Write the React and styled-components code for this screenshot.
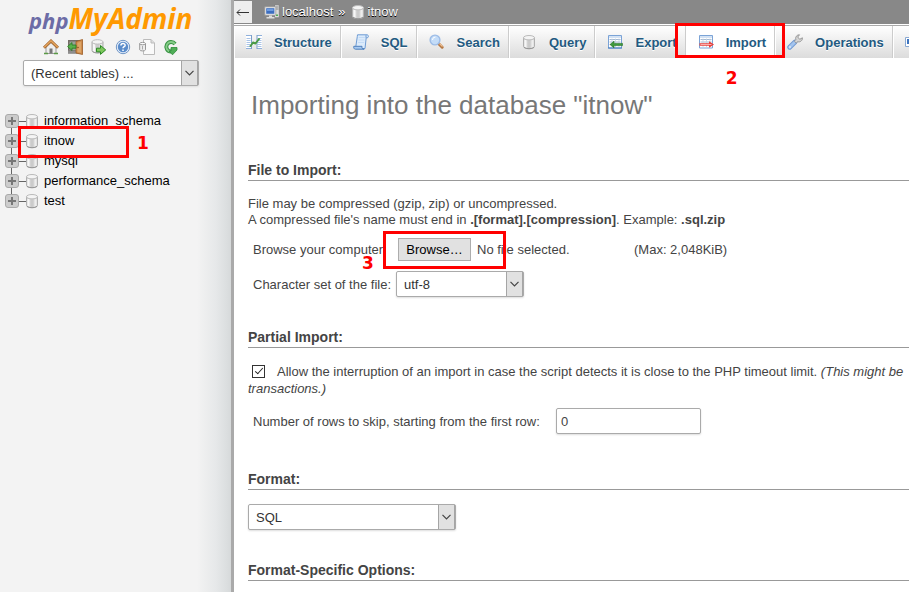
import React, { useRef } from "react";
import styled, { createGlobalStyle, css } from "styled-components";

const Global = createGlobalStyle`
  *, *::before, *::after { box-sizing: border-box; }
  html, body { margin: 0; height: 100%; overflow: hidden; }
  #root { height: 100%; }
  body, button, input, select {
    font-family: "Liberation Sans", Arial, sans-serif;
    font-size: 13px;
    color: #444;
  }
`;

const Page = styled.div`
  display: flex;
  height: 100vh;
  background: #fff;
`;

const Sidebar = styled.aside`
  flex: 0 0 234px;
  border-right: 3px solid #aaa;
  background: linear-gradient(to left, #d6d9da 0, #dcdfe0 5px, #e6e8e9 15px, #f3f3f3 34px);
`;

const Logo = styled.a`
  display: block;
  height: 38px;
  padding-left: 29px;
  font: italic bold 28px/36px "Open Sans", "Noto Sans", sans-serif;
  color: #f90;
  text-decoration: none;
  white-space: nowrap;
`;

const LogoPrefix = styled.span`
  font-size: 22px;
  color: #6c6ca6;
`;

const IconBar = styled.nav`
  display: flex;
  gap: 8px;
  padding: 1px 0 5px 43px;
`;

const IconLink = styled.a`
  display: block;
  width: 16px;
  height: 16px;
`;

const Svg = styled.svg`
  display: block;
  flex: none;
  width: 16px;
  height: 16px;
`;

const RecentTables = styled.div`
  padding: 0 32px 0 23px;
`;

const SelectWrap = styled.div`
  position: relative;
  width: ${(p) => p.$width || "100%"};
  height: 26px;
`;

const field = css`
  height: 26px;
  border: 1px solid #aaa;
  border-radius: 2px;
  background: #fff;
  box-shadow: 0 1px 2px #ddd;
`;

const SelectBox = styled.select`
  ${field}
  appearance: none;
  display: block;
  width: 100%;
  padding: 0 20px 0 7px;
  color: #333;
`;

const SelectArrow = styled.span`
  position: absolute;
  inset: 1px 1px 1px auto;
  width: 17px;
  display: grid;
  place-items: center;
  border: solid #a5a5a5;
  border-width: 0 1px 0 1px;
  background: #e1e1e1;
  pointer-events: none;
`;

const Chevron = styled.svg`
  display: block;
  width: 9px;
  height: 6px;
`;

const Plus = styled.svg`
  display: block;
  width: 8px;
  height: 8px;
`;

const Tree = styled.ul`
  list-style: none;
  margin: 25px 0 0;
  padding: 0 0 0 5px;
`;

const TreeRow = styled.li`
  position: relative;
  display: flex;
  align-items: center;
  height: 20px;
`;

const Expander = styled.button`
  flex: none;
  width: 14px;
  height: 14px;
  padding: 0;
  border: 1px solid #aaa;
  border-radius: 3px;
  background: #ccc;
  display: grid;
  place-items: center;
`;

const Branch = styled.span`
  width: 7px;
  height: 1px;
  background: #666;
`;

const Trunk = styled.span`
  position: absolute;
  left: 6px;
  top: 17px;
  width: 1px;
  height: 6px;
  background: #666;
`;

const TreeLink = styled.a`
  display: flex;
  align-items: center;
  gap: 4px;
  margin-left: -2px;
  color: #000;
  text-decoration: none;
`;

const TreeName = styled.span`
  line-height: 18px;
  padding-bottom: 1px;
`;

const Main = styled.main`
  flex: 1;
  min-width: 0;
  overflow: hidden;
`;

const Crumbs = styled.header`
  display: flex;
  align-items: center;
  height: 24px;
  background: #888;
`;

const BackButton = styled.button`
  width: 18px;
  height: 22px;
  padding: 0;
  border: 0;
  background: #eee;
  display: grid;
  place-items: center;
  margin-right: 12px;
`;

const Crumb = styled.a`
  display: flex;
  align-items: center;
  gap: 2px;
  padding-bottom: 1px;
  color: #fff;
  text-decoration: none;
  text-shadow: 0 1px 0 #000;
`;

const CrumbSep = styled.span`
  padding: 0 4px 1px 5px;
  color: #fff;
  text-shadow: 0 1px 0 #000;
`;

const Tabs = styled.nav`
  display: flex;
  height: 33px;
  margin-top: 1px;
  border-top: 1px solid #aaa;
  background: linear-gradient(#fff, #dcdcdc);
`;

const Tab = styled.a`
  position: relative;
  flex: none;
  display: flex;
  align-items: center;
  gap: 12px;
  padding: 0 8px 0 11px;
  border-left: 1px solid #fff;
  border-right: 1px solid #ccc;
  background: ${(p) => (p.$active ? "#fff" : "transparent")};
  color: #235a81;
  font-weight: bold;
  text-decoration: none;
  text-shadow: 0 1px 0 #fff;
`;

const Content = styled.div`
  padding: 32px 0 0 14px;
`;

const Title = styled.h2`
  margin: 0 0 41px 3px;
  font-size: 26px;
  line-height: 30px;
  font-weight: normal;
  color: #777;
`;

const Section = styled.section`
  margin-bottom: ${(p) => p.$gap}px;
`;

const Legend = styled.h3`
  margin: 0 0 14px;
  padding-bottom: 1px;
  border-bottom: 1px solid #999;
  font-size: 14px;
  line-height: 18px;
  color: #444;
`;

const Para = styled.p`
  margin: 0;
  padding-top: 1px;
  line-height: 16px;
  white-space: nowrap;
`;

const CheckPara = styled(Para)`
  line-height: 17px;
`;

const FormRow = styled.div`
  position: relative;
  display: flex;
  align-items: center;
  padding-left: 5px;
  margin-top: ${(p) => p.$top}px;
  white-space: nowrap;
`;

const FileLabel = styled.label`
  flex: 0 0 145px;
`;

const HiddenFile = styled.input`
  display: none;
`;

const BrowseButton = styled.button`
  width: 73px;
  height: 23px;
  padding: 0;
  border: 1px solid #adadad;
  background: #e1e1e1;
  color: #000;
`;

const FileState = styled.span`
  flex: 0 0 163px;
  padding-left: 6px;
`;

const CharsetLabel = styled.label`
  flex: 0 0 143px;
`;

const RowsLabel = styled.label`
  flex: 0 0 303px;
`;

const TextBox = styled.input`
  ${field}
  width: 145px;
  padding: 0 4px;
`;

const Check = styled.input`
  appearance: none;
  position: relative;
  width: 13px;
  height: 13px;
  margin: 0 12px 0 4px;
  vertical-align: -2px;
  border: 1px solid #333;
  background: #fff;
  &:checked::after {
    content: "";
    position: absolute;
    left: 4px;
    top: 0;
    width: 4px;
    height: 8px;
    border: solid #222;
    border-width: 0 1px 1px 0;
    transform: rotate(42deg);
  }
`;

const Marker = styled.span`
  position: absolute;
  z-index: 2;
  left: ${(p) => p.$x}px;
  top: ${(p) => p.$y}px;
  width: ${(p) => p.$w}px;
  height: ${(p) => p.$h}px;
  border: 3px solid #f00;
  pointer-events: none;
`;

const MarkerNumber = styled.span`
  position: absolute;
  z-index: 2;
  left: ${(p) => p.$x}px;
  top: ${(p) => p.$y}px;
  font: bold 17px/14px "DejaVu Sans", Verdana, sans-serif;
  color: #f00;
  text-shadow: none;
  pointer-events: none;
`;

const Icon = ({ children }) => (
  <Svg viewBox="0 0 16 16" aria-hidden="true">
    {children}
  </Svg>
);

const HomeIcon = () => (
  <Icon>
    <path d="M3 8v6.5h10V8L8 3.5z" fill="#eee" stroke="#999" />
    <path d="M6.5 14.5v-5h3v5z" fill="#777" />
    <path d="M1 8.8 8 2l7 6.8" fill="none" stroke="#9c5a22" strokeWidth="2.8" />
    <path d="M1.2 8.4 8 1.9l6.800 6.500" fill="none" stroke="#e0a25c" strokeWidth="1.5" />
    <path d="M1 14.5h4M11 14.5h4" stroke="#5a9a45" strokeWidth="1.6" />
  </Icon>
);
const ExitIcon = () => (
  <Icon>
    <path d="M1 1h14v13.500H1z" fill="#746d66" />
    <path d="M2.500 2.500H9V11H2.500z" fill="#9aa39a" />
    <path d="M1 11.500h9v3H1z" fill="#8d8d8d" />
    <path d="M9 2.500 15.500.5v15L9 14z" fill="#cf8d4d" stroke="#9a5a25" strokeWidth=".8" />
    <path d="M10.500 3.800 14 2.800v10.900l-3.500-.7z" fill="#dda567" />
    <circle cx="11" cy="8.500" r=".8" fill="#8a5020" />
    <path d="M.6 7.500 5 3.600V6h4v3.200H5v2.400z" fill="#59b14c" stroke="#23791e" strokeWidth=".8" />
  </Icon>
);
const Cylinder = () => (
  <>
    <path d="M2.500 3.800v8.600c0 1.400 2.400 2.300 5.500 2.300s5.500-.9 5.500-2.300V3.800z" fill="#d9d9d9" stroke="#b0b0b0" />
    <path d="M3.500 5.500v7.300l2 .9V6z" fill="#f7f7f7" />
    <path d="M6.500 6.200V14h3V6.200z" fill="#cbcbcb" />
    <path d="M10.500 6v7.700l2-.9V5.500z" fill="#eee" />
    <ellipse cx="8" cy="3.700" rx="5.500" ry="2.200" fill="#f4f4f4" stroke="#bbb" />
    <path d="M3 13.300c2 1.900 8 1.900 10 0" fill="none" stroke="#8f8f8f" strokeWidth=".8" />
  </>
);
const DbIcon = () => (
  <Icon>
    <Cylinder />
  </Icon>
);
const DbExportIcon = () => (
  <Icon>
    <g transform="translate(-1.5 -.8)">
      <Cylinder />
    </g>
    <path d="M5.5 9.2h4V6.5l5.2 4.4-5.2 4.5v-2.6h-4z" fill="#7cc75b" stroke="#2d8a26" />
  </Icon>
);
const HelpIcon = () => (
  <Icon>
    <circle cx="8" cy="8" r="6.700" fill="#e6eefa" stroke="#7096c6" />
    <circle cx="8" cy="8" r="5.200" fill="#5a8ccb" />
    <path d="M5.9 6.5C6 3.9 10.2 4 10.1 6.4 10 7.8 8 7.7 8 9.3M8 10.4V12" fill="none" stroke="#fff" strokeWidth="1.5" />
  </Icon>
);
const DocIcon = () => (
  <Icon>
    <path d="M4.500.500h7.500l3.500 3.500v11.500h-11z" fill="#fafafa" stroke="#bbb" />
    <path d="M12 .500v3.500h3.500" fill="#ddd" stroke="#bbb" />
    <path d="M.7 4.800v6c0 1.500 5.800 1.500 5.800 0v-6z" fill="#eee" stroke="#999" />
    <ellipse cx="3.600" cy="4.600" rx="2.900" ry="1.200" fill="#fff" stroke="#999" />
    <path d="M3.500 7v3.500" stroke="#aaa" />
  </Icon>
);
const ReloadIcon = () => (
  <Icon>
    <path d="M12 5A4.800 4.800 0 1 0 8 12.600" fill="none" stroke="#3b9546" strokeWidth="4" />
    <path d="M12 5A4.800 4.800 0 1 0 8 12.600" fill="none" stroke="#86cc88" strokeWidth="1.800" />
    <path d="M8 8.500h6v2.500l-4.500 4.800L6 12h2z" fill="#4fae57" stroke="#2f8a3a" strokeWidth=".8" />
  </Icon>
);
const ServerIcon = () => (
  <Icon>
    <path d="M10.500.8h4.800v13h-4.800z" fill="#ddd" stroke="#777" strokeWidth=".8" />
    <path d="M11.500 3h3M11.500 5h3" stroke="#888" />
    <path d="M12 10.500h2v1.500h-2z" fill="#4caf50" />
    <path d="M.8 2.800h11v8.400H.8z" fill="#eee" stroke="#999" strokeWidth=".8" />
    <path d="M2.200 4.200h8.200v5.600H2.200z" fill="#3c6ec0" />
    <path d="M3 5h6.500v2H3z" fill="#6d9be0" />
    <path d="M5 11.500h3V13h2.500v1.500h-8V13H5z" fill="#ddd" />
  </Icon>
);
const StructureIcon = () => (
  <Icon>
    <path d="M0 1h5v14H0zM11 1h5v14h-5z" fill="#fff" />
    <path d="M0 1.500h5.500M0 14.500h5.500M11 1.500h5M11 14.500h5" stroke="#8fb0dc" />
    <path d="M.500 4.500h4M.500 6.500h4M.500 8.500h4M.500 10.500h4M.500 12.500h4M11.500 4.500h4M11.500 6.500h4M11.500 8.500h4M11.500 10.500h4M11.500 12.500h4" stroke="#a9c3e6" />
    <path d="M5.500 1v14M11 1v14" stroke="#7c9fca" />
    <path d="M4.500 12 7 8.500l2.500 1L13 5" fill="none" stroke="#4a9a45" strokeWidth="2" strokeLinejoin="round" strokeLinecap="round" />
  </Icon>
);
const SqlIcon = () => (
  <Icon>
    <path d="M4.500.800h9.500c1.800 0 1.900 3 .2 3h-1L12 14.500H2.500L4.300 2.500z" fill="#dcebfb" stroke="#6d9bd4" />
    <path d="M.800 12.300h8.200c-.4 1.500.5 2.900 2.200 2.900H2.500C.800 15.200.500 13.500.800 12.300z" fill="#a9caf0" stroke="#4f80bd" />
    <path d="M13 1.200v2.600" stroke="#6d9bd4" />
    <path d="M5.800 3.500h6M5.500 6h6M5.100 8.500h6" stroke="#c3dbf6" />
  </Icon>
);
const SearchIcon = () => (
  <Icon>
    <path d="m10 10 3.200 3.200" stroke="#b57843" strokeWidth="3" strokeLinecap="round" />
    <path d="m10.500 9.500 3 3" stroke="#ecc096" strokeWidth="1.200" />
    <circle cx="6" cy="6" r="4.900" fill="#c3dcf8" stroke="#9dbce6" strokeWidth="1.400" />
    <path d="M3.500 6a3 3 0 0 1 3-3" stroke="#fff" fill="none" />
  </Icon>
);
const Sheet = () => (
  <>
    <path d="M1.500 1.500h13V14h-13z" fill="#fff" stroke="#7ba3d6" />
    <path d="M2 3h12" stroke="#d3e2f4" strokeWidth="2" />
    <path d="M2.500 5.500h11M2.500 8h11M2.500 10.500h11" stroke="#a4b9d2" />
    <path d="M5 4.500V13M8.500 4.500V13M12 4.500V13" stroke="#c3d2e5" strokeWidth=".8" />
  </>
);
const ExportIcon = () => (
  <Icon>
    <Sheet />
    <path d="M1 14h14" stroke="#3f78bd" />
    <path d="M3 10.500 7 7.200v2.200h8.500v2.200H7v2.200z" fill="#3f9a3c" stroke="#256f25" strokeWidth=".6" />
  </Icon>
);
const ImportIcon = () => (
  <Icon>
    <Sheet />
    <path d="M1.500 9.200h9.500V7.300l5 3.200-5 3.200v-2H1.500z" fill="#e8403c" />
    <path d="M2.500 10.500h11" stroke="#ffb9b5" strokeWidth=".9" />
  </Icon>
);
const WrenchIcon = () => (
  <Icon>
    <path d="M2.700 13.300 8 8" stroke="#6f98d2" strokeWidth="4.800" strokeLinecap="round" />
    <path d="M2.700 13.300 7.700 8.300" stroke="#a3c4ee" strokeWidth="3" strokeLinecap="round" />
    <path d="M7.300 7.200 8.800 5.500C8 3 10 .7 12.500.8L10.700 3l2 2.300 2.700-1.500c.4 2.700-2.400 4.700-4.600 3.900L9.200 9z" fill="#d5d5d5" stroke="#888" strokeWidth=".8" />
    <circle cx="3" cy="13" r=".8" fill="#fff" />
  </Icon>
);
const RoutinesIcon = () => (
  <Icon>
    <path d="M.5 3.500h14v9H.5z" fill="#fff" stroke="#8aa9d2" />
    <path d="M2 5h5v5H2z" fill="#3d74bf" />
    <circle cx="5.500" cy="8" r="1.500" fill="#e3a45b" />
  </Icon>
);

function Select({ id, label, value, width }) {
  return (
    <SelectWrap $width={width}>
      <SelectBox id={id} aria-label={label} defaultValue={value}>
        <option>{value}</option>
      </SelectBox>
      <SelectArrow>
        <Chevron viewBox="0 0 9 6" aria-hidden="true">
          <path d="m.5.8 4 4 4-4" fill="none" stroke="#444" strokeWidth="1.200" />
        </Chevron>
      </SelectArrow>
    </SelectWrap>
  );
}

const quickLinks = [
  ["Home", HomeIcon],
  ["Log out", ExitIcon],
  ["Query window", DbExportIcon],
  ["Documentation", HelpIcon],
  ["SQL documentation", DocIcon],
  ["Reload", ReloadIcon],
];

const databases = ["information_schema", "itnow", "mysql", "performance_schema", "test"];

const tabs = [
  ["Structure", StructureIcon],
  ["SQL", SqlIcon],
  ["Search", SearchIcon],
  ["Query", DbIcon],
  ["Export", ExportIcon],
  ["Import", ImportIcon],
  ["Operations", WrenchIcon],
];

export default function App() {
  const file = useRef(null);
  return (
    <Page>
      <Global />
      <Sidebar>
        <Logo href="#">
          <LogoPrefix>php</LogoPrefix>MyAdmin
        </Logo>
        <IconBar>
          {quickLinks.map(([name, Glyph]) => (
            <IconLink href="#" key={name} aria-label={name}>
              <Glyph />
            </IconLink>
          ))}
        </IconBar>
        <RecentTables>
          <Select id="recent" label="Recent tables" value="(Recent tables) ..." />
        </RecentTables>
        <Tree>
          {databases.map((name, i) => (
            <TreeRow key={name}>
              <Expander aria-label={`Expand ${name}`}>
                <Plus viewBox="0 0 8 8" aria-hidden="true">
                  <path d="M4 0v8M0 4h8" stroke="#777" strokeWidth="2" />
                </Plus>
              </Expander>
              <Branch />
              <TreeLink href="#">
                <DbIcon />
                <TreeName>{name}</TreeName>
              </TreeLink>
              {i < databases.length - 1 && <Trunk />}
              {name === "itnow" && (
                <>
                  <Marker $x={13} $y={-5} $w={111} $h={32} />
                  <MarkerNumber $x={132} $y={5}>1</MarkerNumber>
                </>
              )}
            </TreeRow>
          ))}
        </Tree>
      </Sidebar>
      <Main>
        <Crumbs>
          <BackButton aria-label="Hide panel">
            <Svg viewBox="0 0 16 16" aria-hidden="true">
              <path d="M2 8.500h12M5 5.500l-3 3 3 3" fill="none" stroke="#333" />
            </Svg>
          </BackButton>
          <Crumb href="#">
            <ServerIcon />
            localhost
          </Crumb>
          <CrumbSep>»</CrumbSep>
          <Crumb href="#">
            <DbIcon />
            itnow
          </Crumb>
        </Crumbs>
        <Tabs>
          {tabs.map(([name, Glyph]) => (
            <Tab href="#" key={name} $active={name === "Import"}>
              <Glyph />
              {name}
              {name === "Import" && (
                <>
                  <Marker $x={-12} $y={-3} $w={110} $h={35} />
                  <MarkerNumber $x={39} $y={45}>2</MarkerNumber>
                </>
              )}
            </Tab>
          ))}
          <Tab href="#" aria-label="Routines">
            <RoutinesIcon />
          </Tab>
        </Tabs>
        <Content>
          <Title>Importing into the database "itnow"</Title>
          <Section $gap={31}>
            <Legend>File to Import:</Legend>
            <Para>
              File may be compressed (gzip, zip) or uncompressed.
              <br />A compressed file's name must end in <b>.[format].[compression]</b>. Example: <b>.sql.zip</b>
            </Para>
            <FormRow $top={10}>
              <FileLabel htmlFor="file">Browse your computer:</FileLabel>
              <HiddenFile id="file" type="file" ref={file} />
              <BrowseButton type="button" onClick={() => file.current.click()}>
                Browse…
              </BrowseButton>
              <FileState>No file selected.</FileState>
              <span>(Max: 2,048KiB)</span>
              <Marker $x={135} $y={-7} $w={123} $h={38} />
              <MarkerNumber $x={114} $y={18}>3</MarkerNumber>
            </FormRow>
            <FormRow $top={10}>
              <CharsetLabel htmlFor="charset">Character set of the file:</CharsetLabel>
              <Select id="charset" value="utf-8" width="128px" />
            </FormRow>
          </Section>
          <Section $gap={36}>
            <Legend>Partial Import:</Legend>
            <CheckPara>
              <Check type="checkbox" id="interrupt" defaultChecked />
              <label htmlFor="interrupt">
                Allow the interruption of an import in case the script detects it is close to the PHP timeout limit.{" "}
                <i>
                  (This might be
                  <br />
                  transactions.)
                </i>
              </label>
            </CheckPara>
            <FormRow $top={11}>
              <RowsLabel htmlFor="skip">Number of rows to skip, starting from the first row:</RowsLabel>
              <TextBox id="skip" type="text" defaultValue="0" />
            </FormRow>
          </Section>
          <Section $gap={31}>
            <Legend>Format:</Legend>
            <Select id="format" label="Format" value="SQL" width="208px" />
          </Section>
          <Section $gap={0}>
            <Legend>Format-Specific Options:</Legend>
          </Section>
        </Content>
      </Main>
    </Page>
  );
}
